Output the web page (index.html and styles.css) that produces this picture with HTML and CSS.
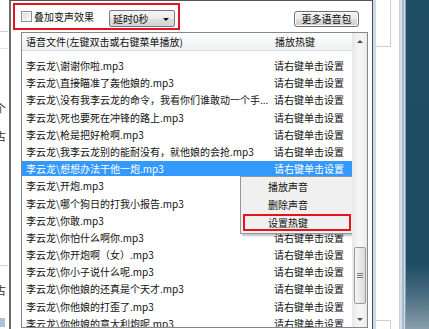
FILE: index.html
```html
<!DOCTYPE html>
<html lang="zh-CN">
<head>
<meta charset="utf-8">
<title>语音设置</title>
<link rel="stylesheet" href="styles.css">
</head>
<body>
<div class="screen">
  <div class="bg-left">
    <div class="bl-line bl-l1"></div>
    <div class="bl-line bl-l2"></div>
    <div class="bl-char bl-c1">个</div>
    <div class="bl-char bl-c2">古</div>
    <div class="bl-line bl-l3"></div>
    <div class="bl-char bl-c3">古</div>
    <div class="bl-blue"></div>
  </div>

  <div class="dialog">
    <div class="toolbar">
      <div class="redgroup">
        <span class="checkbox"></span>
        <span class="cb-label">叠加变声效果</span>
        <div class="combo">
          <span class="combo-text">延时0秒</span>
          <span class="combo-arrow"></span>
        </div>
      </div>
      <div class="btn">更多语音包</div>
    </div>

    <div class="listbox">
      <div class="list-main">
        <div class="lv-header">
          <div class="col-name">语音文件(左键双击或右键菜单播放)</div>
          <div class="col-key">播放热键</div>
        </div>
        <div class="lv-body">
          <div class="row"><div class="col-name">李云龙\谢谢你啦.mp3</div><div class="col-key">请右键单击设置</div></div>
          <div class="row"><div class="col-name">李云龙\直接瞄准了轰他娘的.mp3</div><div class="col-key">请右键单击设置</div></div>
          <div class="row"><div class="col-name">李云龙\没有我李云龙的命令，我看你们谁敢动一个手...</div><div class="col-key">请右键单击设置</div></div>
          <div class="row"><div class="col-name">李云龙\死也要死在冲锋的路上.mp3</div><div class="col-key">请右键单击设置</div></div>
          <div class="row"><div class="col-name">李云龙\枪是把好枪啊.mp3</div><div class="col-key">请右键单击设置</div></div>
          <div class="row"><div class="col-name">李云龙\我李云龙别的能耐没有，就他娘的会抢.mp3</div><div class="col-key">请右键单击设置</div></div>
          <div class="row selected"><div class="col-name">李云龙\想想办法干他一炮.mp3</div><div class="col-key">请右键单击设置</div></div>
          <div class="row"><div class="col-name">李云龙\开炮.mp3</div><div class="col-key"></div></div>
          <div class="row"><div class="col-name">李云龙\哪个狗日的打我小报告.mp3</div><div class="col-key"></div></div>
          <div class="row"><div class="col-name">李云龙\你敢.mp3</div><div class="col-key"></div></div>
          <div class="row"><div class="col-name">李云龙\你怕什么啊你.mp3</div><div class="col-key">请右键单击设置</div></div>
          <div class="row"><div class="col-name">李云龙\你开炮啊（女）.mp3</div><div class="col-key">请右键单击设置</div></div>
          <div class="row"><div class="col-name">李云龙\你小子说什么呢.mp3</div><div class="col-key">请右键单击设置</div></div>
          <div class="row"><div class="col-name">李云龙\你他娘的还真是个天才.mp3</div><div class="col-key">请右键单击设置</div></div>
          <div class="row"><div class="col-name">李云龙\你他娘的打歪了.mp3</div><div class="col-key">请右键单击设置</div></div>
          <div class="row"><div class="col-name">李云龙\你他娘的意大利炮呢.mp3</div><div class="col-key">请右键单击设置</div></div>
        </div>

        <div class="ctx-menu">
          <div class="mi">播放声音</div>
          <div class="mi">删除声音</div>
          <div class="mi mi-red">设置热键</div>
        </div>
      </div>
      <div class="vscroll">
        <div class="sb-btn"><span class="arr-up"></span></div>
        <div class="sb-track">
          <div class="sb-thumb"><span class="grip"></span><span class="grip"></span><span class="grip"></span></div>
        </div>
        <div class="sb-btn sb-down"><span class="arr-down"></span></div>
      </div>
    </div>
  </div>

  <div class="gap">
    <div class="gap-box"></div>
    <div class="gap-box2"></div>
  </div>
  <div class="frame"></div>
  <div class="desktop"></div>
</div>
</body>
</html>
```

FILE: styles.css
```css
html, body {
  margin: 0;
  padding: 0;
}
body {
  width: 429px;
  height: 329px;
  overflow: hidden;
  background: #ffffff;
  font-family: "Noto Sans CJK SC", "Noto Sans", sans-serif;
  font-size: 10px;
  color: #111;
}
.screen {
  display: flex;
  width: 429px;
  height: 329px;
  overflow: hidden;
}

/* background window on the left */
.bg-left {
  width: 9px;
  flex: none;
  display: flex;
  flex-direction: column;
  overflow: hidden;
  background: #fff;
}
.bl-line {
  height: 1px;
  width: 8px;
  background: #cfd3d8;
  flex: none;
}
.bl-l1 { margin-top: 31px; }
.bl-l2 { margin-top: 16px; background: #e4e6e9; }
.bl-char {
  font-size: 11px;
  line-height: 12px;
  height: 12px;
  margin-left: -5px;
  color: #333;
  white-space: nowrap;
}
.bl-c1 { margin-top: 53px; }
.bl-c2 { margin-top: 16px; }
.bl-l3 { margin-top: 123px; }
.bl-c3 { margin-top: 18px; }
.bl-blue {
  margin-top: 22px;
  width: 5px;
  height: 9px;
  background: #a9c3de;
}

/* dialog */
.dialog {
  width: 364px;
  flex: none;
  box-sizing: border-box;
  border-left: 2px solid #6b6b6b;
  border-right: 1px solid #4a4a4a;
  border-top: 1px solid #555;
  background: #ffffff;
  display: flex;
  flex-direction: column;
}
.toolbar {
  height: 31px;
  flex: none;
  display: flex;
  align-items: flex-start;
}
.redgroup {
  margin-top: 2px;
  margin-left: 2px;
  width: 167px;
  height: 27px;
  box-sizing: border-box;
  border: 2px solid #e5131b;
  display: flex;
  align-items: center;
  padding-left: 6px;
}
.checkbox {
  width: 11px;
  height: 11px;
  box-sizing: border-box;
  border: 1px solid #8e8f8f;
  background: linear-gradient(135deg, #d6d6d6, #f4f4f4 70%, #ffffff);
  box-shadow: inset 0 0 0 1px #f5f5f5;
  flex: none;
}
.cb-label {
  margin-left: 2px;
  font-size: 10px;
  line-height: 12px;
  color: #111;
  margin-top: 1px;
}
.combo {
  margin-left: 15px;
  margin-top: 4px;
  width: 66px;
  height: 17px;
  box-sizing: border-box;
  border: 1px solid #7a7a7a;
  border-radius: 2px;
  background: linear-gradient(#f4f4f4, #ececec 50%, #dedede 51%, #d4d4d4);
  display: flex;
  align-items: center;
  padding-left: 3px;
}
.combo-text {
  font-size: 10px;
  line-height: 12px;
  flex: 1;
}
.combo-arrow {
  width: 0;
  height: 0;
  border-left: 3px solid transparent;
  border-right: 3px solid transparent;
  border-top: 3px solid #111;
  margin-right: 5px;
  margin-top: 1px;
}
.btn {
  margin-left: auto;
  margin-right: 13px;
  margin-top: 10px;
  width: 65px;
  height: 16px;
  box-sizing: border-box;
  border: 1px solid #707070;
  border-radius: 3px;
  background: linear-gradient(#f2f2f2, #ebebeb 50%, #dddddd 51%, #cfcfcf);
  box-shadow: inset 0 0 0 1px #fafafa;
  font-size: 10px;
  line-height: 14px;
  text-align: center;
  color: #111;
}

/* list box */
.listbox {
  margin-left: 10px;
  width: 347px;
  height: 296px;
  box-sizing: border-box;
  border: 1px solid #828790;
  display: flex;
  flex: none;
}
.list-main {
  width: 330px;
  flex: none;
  position: relative;
  overflow: hidden;
}
.lv-header {
  height: 18px;
  box-sizing: border-box;
  display: flex;
  align-items: center;
  background: linear-gradient(#ffffff, #f6f7f8 50%, #eef0f2);
  border-bottom: 1px solid #d8dbe0;
}
.col-name {
  width: 248px;
  flex: none;
  box-sizing: border-box;
  padding-left: 4px;
  white-space: nowrap;
  overflow: hidden;
}
.col-key {
  flex: 1;
  padding-left: 4px;
  white-space: nowrap;
  overflow: hidden;
}
.lv-header .col-name,
.lv-header .col-key {
  font-size: 10px;
  line-height: 14px;
  color: #111;
}
.lv-header .col-key { padding-left: 5px; }
.lv-body {
  padding-top: 7px;
}
.row {
  height: 15px;
  margin-bottom: 2.2px;
  display: flex;
  align-items: center;
  font-size: 10px;
  line-height: 15px;
  color: #111;
}
.row.selected {
  background: #3399ff;
  color: #ffffff;
}

/* context menu (overlay) */
.ctx-menu {
  position: absolute;
  left: 218px;
  top: 143px;
  width: 113px;
  height: 58px;
  box-sizing: border-box;
  border: 1px solid #979797;
  background: #f0f0f0;
  padding: 1px 0;
  box-shadow: 2px 2px 2px rgba(0, 0, 0, 0.25);
}
.mi {
  height: 18px;
  box-sizing: border-box;
  padding-left: 27px;
  font-size: 10px;
  line-height: 18px;
  color: #111;
}
.mi-red {
  margin: 0 1px 0 2px;
  border: 2px solid #e5131b;
  padding-left: 23px;
  line-height: 14px;
  height: 17px;
}

/* scrollbar */
.vscroll {
  width: 15px;
  flex: none;
  display: flex;
  flex-direction: column;
  background: linear-gradient(to right, #e8e8e8, #f4f4f4 40%, #f4f4f4 70%, #e9e9e9);
}
.sb-btn {
  height: 17px;
  flex: none;
  display: flex;
  align-items: center;
  justify-content: center;
}
.sb-down { height: 15px; }
.arr-up {
  width: 0;
  height: 0;
  border-left: 3px solid transparent;
  border-right: 3px solid transparent;
  border-bottom: 3px solid #505050;
}
.arr-down {
  width: 0;
  height: 0;
  border-left: 3px solid transparent;
  border-right: 3px solid transparent;
  border-top: 3px solid #505050;
}
.sb-track {
  flex: 1;
  position: relative;
}
.sb-thumb {
  margin-top: 197px;
  margin-left: 2px;
  width: 12px;
  height: 57px;
  box-sizing: border-box;
  border: 1px solid #9b9b9b;
  border-radius: 2px;
  background: linear-gradient(to right, #f5f5f5, #e9e9e9 50%, #dadada);
  display: flex;
  flex-direction: column;
  align-items: center;
  justify-content: center;
  gap: 1px;
}
.grip {
  width: 6px;
  height: 1px;
  background: #7a7a7a;
}

/* right side windows / desktop */
.gap {
  width: 26px;
  flex: none;
  box-sizing: border-box;
  border-left: 3px solid #c8daec;
  background: #ffffff;
  display: flex;
  flex-direction: column;
  justify-content: space-between;
}
.gap-box {
  width: 15px;
  height: 47px;
  box-sizing: border-box;
  border-right: 1px solid #cfcfcf;
  border-bottom: 1px solid #cfcfcf;
}
.gap-box2 {
  width: 15px;
  height: 9px;
  box-sizing: border-box;
  border-right: 1px solid #cfcfcf;
  border-top: 1px solid #cfcfcf;
}
.frame {
  width: 7px;
  flex: none;
  background: linear-gradient(to right, #b9c9d8, #e1e9f1 30%, #93aabd 60%, #d6e1eb 80%, #5d7c93);
}
.desktop {
  flex: 1;
  background: linear-gradient(#1f4f65, #1d4b61 80%, #4c6e82 90%, #8a9eab);
}
```
